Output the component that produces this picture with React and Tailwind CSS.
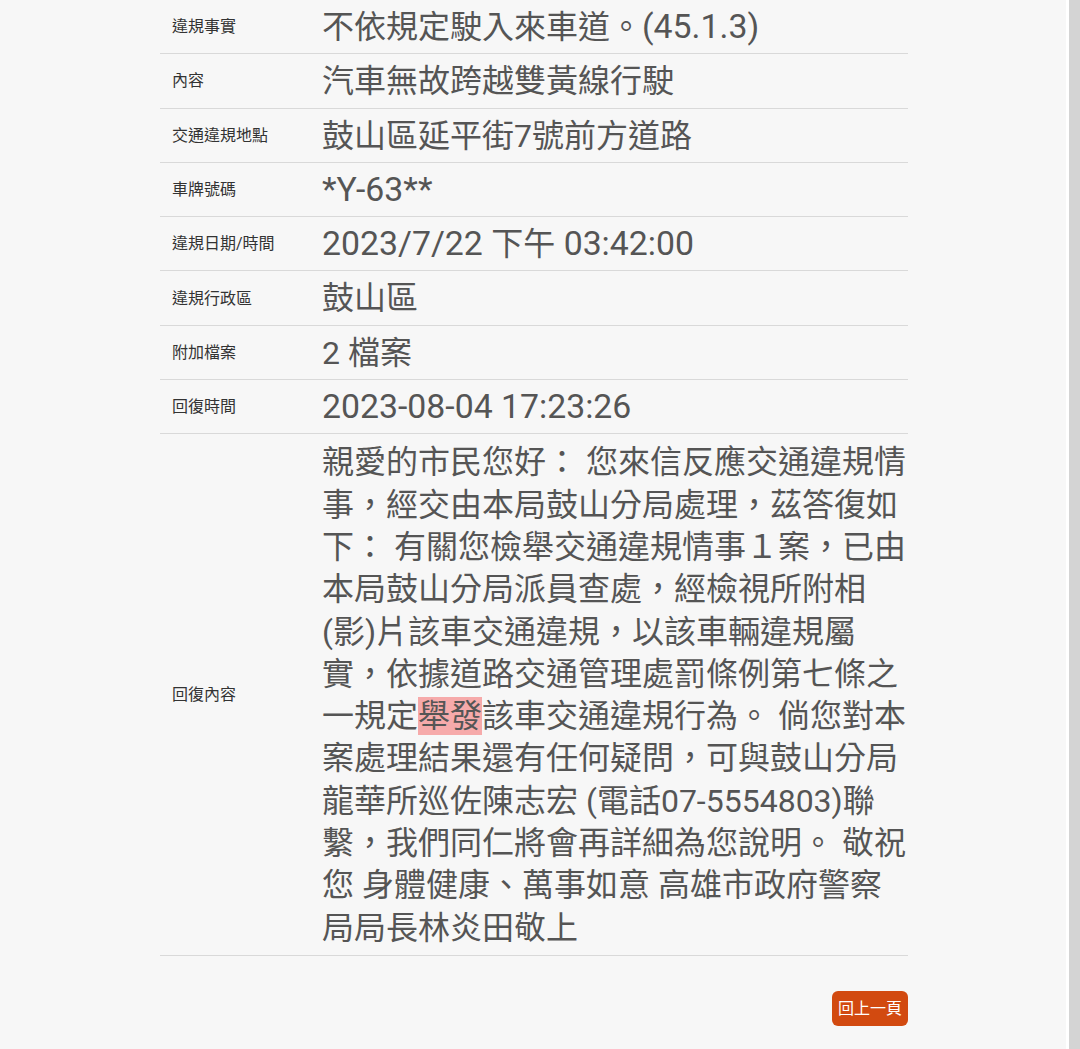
import React from 'react';

const rows = [
  { label: '違規事實', value: '不依規定駛入來車道。(45.1.3)' },
  { label: '內容', value: '汽車無故跨越雙黃線行駛' },
  { label: '交通違規地點', value: '鼓山區延平街7號前方道路' },
  { label: '車牌號碼', value: '*Y-63**' },
  { label: '違規日期/時間', value: '2023/7/22 下午 03:42:00' },
  { label: '違規行政區', value: '鼓山區' },
  { label: '附加檔案', value: '2 檔案' },
  { label: '回復時間', value: '2023-08-04 17:23:26' },
];

const font = { fontFamily: 'Roboto, "Noto Sans CJK TC", sans-serif' };

// latin runs render a bit larger than the CJK ones in the source page
function Value({ text }) {
  const parts = text.split(/([\x20-\x7e]+)/).filter(Boolean);
  return parts.map((p, i) =>
    /^[\x20-\x7e]+$/.test(p) && p.trim().length > 1 ? (
      <span key={i} className="text-[33.8px]">{p}</span>
    ) : (
      <span key={i}>{p}</span>
    )
  );
}

export default function App() {
  return (
    <div className="flex h-[1049px] w-full overflow-hidden bg-[#f7f7f7]" style={font}>
      <main className="flex-1 pl-[160px] pr-[158px]">
        <table className="w-full border-collapse">
          <tbody>
            {rows.map((r) => (
              <tr key={r.label} className="border-b border-[#d9d9d9]">
                <td className="w-[150px] pl-3 align-middle text-[16px] leading-[21px] text-[#333]">{r.label}</td>
                <td className="pl-3 pt-[6px] pb-[5px] text-[32px] leading-[42.3px] text-[#555]">
                  <Value text={r.value} />
                </td>
              </tr>
            ))}
            <tr className="border-b border-[#d9d9d9]">
              <td className="w-[150px] pl-3 align-middle text-[16px] leading-[21px] text-[#333]">回復內容</td>
              <td className="pl-3 pt-[7px] pb-[6px] text-[32px] leading-[42.3px] text-[#555]">
                親愛的市民您好： 您來信反應交通違規情事，經交由本局鼓山分局處理，茲答復如下： 有關您檢舉交通違規情事１案，已由本局鼓山分局派員查處，經檢視所附相(影)片該車交通違規，以該車輛違規屬實，依據道路交通管理處罰條例第七條之一規定<span className="bg-[#f6aaaa]">舉發</span>該車交通違規行為。 倘您對本案處理結果還有任何疑問，可與鼓山分局龍華所巡佐陳志宏 (電話07-5554803)聯繫，我們同仁將會再詳細為您說明。 敬祝 您 身體健康、萬事如意 高雄市政府警察局局長林炎田敬上
              </td>
            </tr>
          </tbody>
        </table>
        <div className="mt-[35px] flex justify-end">
          <button className="rounded-[6px] bg-[#d24a10] px-[6px] py-[7px] text-[16px] leading-[21px] text-white">回上一頁</button>
        </div>
      </main>
      <div className="w-[3px] bg-white" />
      <div className="w-[11px] bg-[#d4d4d4]" />
    </div>
  );
}
